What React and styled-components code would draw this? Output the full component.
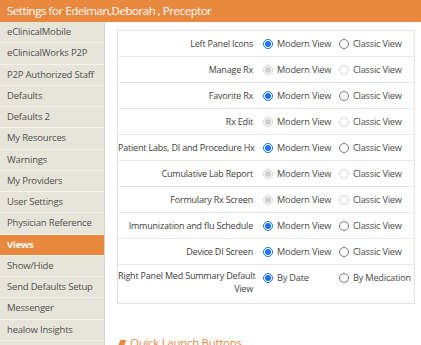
import React from "react";
import styled, { createGlobalStyle } from "styled-components";

const Global = createGlobalStyle`
  html, body { margin: 0; padding: 0; background: #fff; overflow: hidden; }
  body { font-family: "Open Sans", "Noto Sans", sans-serif; }
`;

const Page = styled.div`
  width: 421px;
  height: 345px;
  display: flex;
  flex-direction: column;
  overflow: hidden;
`;

const Header = styled.div`
  height: 22px;
  flex: none;
  background: #e9893f;
  color: #fff;
  font-size: 11.5px;
  letter-spacing: -0.45px;
  line-height: 22px;
  padding-left: 7px;
  white-space: nowrap;
`;

const Body = styled.div`
  display: flex;
  flex: 1;
  min-height: 0;
`;

const Sidebar = styled.ul`
  list-style: none;
  margin: 0;
  padding: 0;
  width: 104px;
  flex: none;
  background: #e7e5da;
  border-right: 1px solid #d6d4ca;
`;

const NavItem = styled.li`
  height: 20.25px;
  line-height: 20px;
  border-bottom: 1px solid #f3f2ec;
  padding-left: 7px;
  font-size: 9.5px;
  letter-spacing: -0.2px;
  white-space: nowrap;
  color: ${(p) => (p.$active ? "#fff" : "#4f4f4f")};
  background: ${(p) => (p.$active ? "#e9893f" : "transparent")};
  font-weight: ${(p) => (p.$active ? 700 : 400)};
`;

const Main = styled.div`
  flex: 1;
  padding: 8px 8px 0 12px;
  display: flex;
  flex-direction: column;
`;

const Table = styled.div`
  width: 296px;
  border: 1px solid #e2e2e2;
  display: flex;
  flex-direction: column;
`;

const Row = styled.div`
  display: grid;
  grid-template-columns: 143px 1fr;
  min-height: 25px;
  align-items: ${(p) => (p.$tall ? "start" : "center")};
  border-bottom: ${(p) => (p.$last ? "none" : "1px solid #e6e6e6")};
  padding: ${(p) => (p.$tall ? "4px 0 8px" : "0")};
`;

const Label = styled.div`
  text-align: right;
  font-size: 9px;
  letter-spacing: -0.2px;
  line-height: 13px;
  color: #3e3e3e;
  padding-right: 8px;
  white-space: nowrap;
`;

const Line = styled.span`
  display: block;
`;

const Options = styled.div`
  display: grid;
  grid-template-columns: 76px 1fr;
  align-items: center;
  padding-left: 2px;
  padding-top: ${(p) => (p.$tall ? "2px" : "0")};
`;

const Option = styled.label`
  display: flex;
  align-items: center;
  gap: 4px;
  font-size: 9.2px;
  letter-spacing: -0.2px;
  color: #4a4a4a;
  white-space: nowrap;
`;

const Radio = styled.span`
  width: 10px;
  height: 10px;
  box-sizing: border-box;
  border-radius: 50%;
  flex: none;
  border: 1px solid
    ${(p) => (p.$disabled ? "#d4d4d4" : p.$checked ? "#1a73e8" : "#777")};
  background: #fff;
  display: flex;
  align-items: center;
  justify-content: center;
  &::after {
    content: "";
    display: ${(p) => (p.$checked ? "block" : "none")};
    width: 6px;
    height: 6px;
    border-radius: 50%;
    background: ${(p) => (p.$disabled ? "#cfcfcf" : "#1a73e8")};
  }
`;

const Section = styled.div`
  margin-top: 32px;
  display: flex;
  align-items: center;
  gap: 5px;
  color: #e9893f;
  font-size: 11.5px;
  letter-spacing: -0.3px;
  line-height: 14px;
  white-space: nowrap;
`;

const Slant = styled.span`
  width: 6px;
  height: 7px;
  background: #e9893f;
  transform: skewX(-20deg);
  margin-left: 2px;
`;

const nav = [
  "eClinicalMobile",
  "eClinicalWorks P2P",
  "P2P Authorized Staff",
  "Defaults",
  "Defaults 2",
  "My Resources",
  "Warnings",
  "My Providers",
  "User Settings",
  "Physician Reference",
  "Views",
  "Show/Hide",
  "Send Defaults Setup",
  "Messenger",
  "healow Insights",
];

const rows = [
  { label: ["Left Panel Icons"] },
  { label: ["Manage Rx"], disabled: true },
  { label: ["Favorite Rx"] },
  { label: ["Rx Edit"], disabled: true },
  { label: ["Patient Labs, DI and Procedure Hx"] },
  { label: ["Cumulative Lab Report"], disabled: true },
  { label: ["Formulary Rx Screen"], disabled: true },
  { label: ["Immunization and flu Schedule"] },
  { label: ["Device DI Screen"] },
  {
    label: ["Right Panel Med Summary Default", "View"],
    a: "By Date",
    b: "By Medication",
    tall: true,
  },
];

export default function App() {
  return (
    <Page>
      <Global />
      <Header>Settings for Edelman,Deborah , Preceptor</Header>
      <Body>
        <Sidebar>
          {nav.map((n) => (
            <NavItem key={n} $active={n === "Views"}>
              {n}
            </NavItem>
          ))}
        </Sidebar>
        <Main>
          <Table>
            {rows.map((r, i) => (
              <Row key={r.label[0]} $tall={r.tall} $last={i === rows.length - 1}>
                <Label>
                  {r.label.map((l) => (
                    <Line key={l}>{l}</Line>
                  ))}
                </Label>
                <Options $tall={r.tall}>
                  <Option>
                    <Radio $checked $disabled={r.disabled} />
                    {r.a || "Modern View"}
                  </Option>
                  <Option>
                    <Radio $disabled={r.disabled} />
                    {r.b || "Classic View"}
                  </Option>
                </Options>
              </Row>
            ))}
          </Table>
          <Section>
            <Slant />
            Quick Launch Buttons
          </Section>
        </Main>
      </Body>
    </Page>
  );
}
